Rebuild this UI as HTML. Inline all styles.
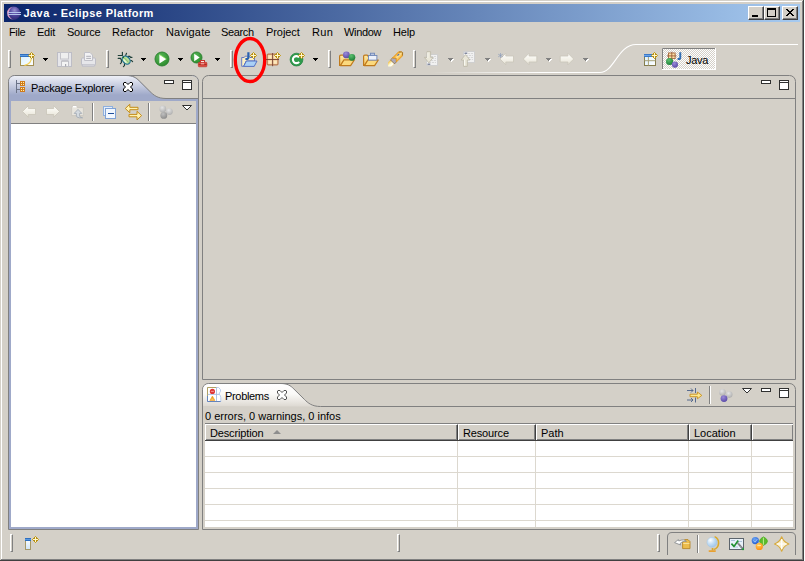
<!DOCTYPE html>
<html><head><meta charset="utf-8"><title>Java - Eclipse Platform</title>
<style>
*{box-sizing:border-box;margin:0;padding:0}
html,body{width:805px;height:561px;overflow:hidden;background:#d4d0c8}
body{position:relative;font-family:"Liberation Sans",sans-serif;font-size:11px;color:#000}
.abs{position:absolute}
.t{position:absolute;white-space:nowrap;line-height:13px;height:13px}
#title{left:4px;top:4px;width:796px;height:18px;background:linear-gradient(90deg,#0a246a 0%,#a6caf0 100%)}
#title .t{left:19.5px;top:3px;color:#fff;font-weight:bold;font-size:11px;letter-spacing:0.43px}
.wbtn{position:absolute;top:6px;width:16px;height:14px;background:#d4d0c8;border:1px solid;border-color:#fff #404040 #404040 #fff;box-shadow:inset -1px -1px 0 #808080}
.menu .t{top:26px}
.sep{position:absolute;width:3px;background:#d4d0c8;border-left:1px solid #fff;border-right:1px solid #808080;border-top:1px solid #fff;border-bottom:1px solid #808080}
.vline{position:absolute;width:2px;border-left:1px solid #808080;border-right:1px solid #fff}
svg{position:absolute;overflow:visible}
.hdr{top:424px;height:17px;background:#d4d0c8;border-top:1px solid #fff;border-left:1px solid #fff;border-right:1px solid #404040;border-bottom:1px solid #404040;box-shadow:inset -1px -1px 0 #808080}
.gl{left:205px;width:588px;height:1px;background:#dcd8cf}
.gv{top:441px;width:1px;height:86px;background:#dcd8cf}
</style></head><body>
<div class="abs" style="left:0;top:0;width:805px;height:561px;background:#d4d0c8"></div>
<div class="abs" style="left:1px;top:1px;width:801px;height:1px;background:#fff"></div>
<div class="abs" style="left:1px;top:1px;width:1px;height:558px;background:#fff"></div>
<div class="abs" style="left:802px;top:1px;width:1px;height:559px;background:#808080"></div>
<div class="abs" style="left:803px;top:0;width:1px;height:561px;background:#404040"></div>
<div class="abs" style="left:804px;top:0;width:1px;height:561px;background:#fff"></div>
<div class="abs" style="left:1px;top:559px;width:802px;height:1px;background:#808080"></div>
<div class="abs" style="left:0;top:560px;width:804px;height:1px;background:#404040"></div>
<div id="title" class="abs"><div class="t">Java - Eclipse Platform</div></div>
<div class="wbtn" style="left:748px"></div><div class="wbtn" style="left:764px"></div><div class="wbtn" style="left:782px"></div>
<svg style="left:0;top:0" width="805" height="561" shape-rendering="crispEdges">
<rect x="752" y="15" width="6" height="2" fill="#000"/>
<path d="M767,8h9v9h-9z M768,10v6h7v-6z" fill="#000" fill-rule="evenodd"/>
<path d="M786,9h2v1h1v1h2v-1h1v-1h2v1h-1v1h-1v1h-1v1h1v1h1v1h1v1h-2v-1h-1v-1h-2v1h-1v1h-2v-1h1v-1h1v-1h1v-1h-1v-1h-1v-1h-1z" fill="#000"/>
</svg>

<div class="menu"><div class="t" style="left:9px;letter-spacing:-0.35px">File</div><div class="t" style="left:37px;letter-spacing:-0.25px">Edit</div><div class="t" style="left:67px;letter-spacing:-0.25px">Source</div><div class="t" style="left:112px;letter-spacing:0px">Refactor</div><div class="t" style="left:166px;letter-spacing:0.15px">Navigate</div><div class="t" style="left:221px;letter-spacing:-0.35px">Search</div><div class="t" style="left:266px;letter-spacing:-0.07px">Project</div><div class="t" style="left:312px;letter-spacing:0.35px">Run</div><div class="t" style="left:344px;letter-spacing:-0.35px">Window</div><div class="t" style="left:393px;letter-spacing:-0.2px">Help</div></div>
<div class="sep" style="left:8px;top:50px;height:18px"></div>
<div class="sep" style="left:106px;top:50px;height:18px"></div>
<div class="sep" style="left:230px;top:50px;height:18px"></div>
<div class="sep" style="left:328px;top:50px;height:18px"></div>
<div class="sep" style="left:413px;top:50px;height:18px"></div>
<svg style="left:0;top:0" width="805" height="561">
<defs><pattern id="chk" width="2" height="2" patternUnits="userSpaceOnUse"><rect width="2" height="2" fill="#d4d0c8"/><rect width="1" height="1" fill="#fff"/><rect x="1" y="1" width="1" height="1" fill="#fff"/></pattern></defs>
<defs><linearGradient id="wl" x1="430" y1="0" x2="540" y2="0" gradientUnits="userSpaceOnUse"><stop offset="0" stop-color="#fff" stop-opacity="0"/><stop offset="1" stop-color="#fff"/></linearGradient></defs>
<rect x="430" y="72" width="112" height="1" fill="url(#wl)"/>
<path d="M540,72.5 H600 C614,72.5 618,44.5 636,44.5 H798" fill="none" stroke="#fff" stroke-width="1.1"/>
<rect x="662" y="48" width="54" height="22" fill="url(#chk)" shape-rendering="crispEdges"/>
<path d="M662.5,70 V48.5 H716" fill="none" stroke="#808080"/>
<path d="M662,69.5 H715.5 V48" fill="none" stroke="#fff"/>
</svg>
<div class="t" style="left:686px;top:54px;letter-spacing:-0.3px">Java</div>

<svg style="left:0;top:0" width="805" height="561">
<defs><linearGradient id="tg" x1="0" y1="76" x2="0" y2="95" gradientUnits="userSpaceOnUse"><stop offset="0" stop-color="#eef0f7"/><stop offset="1" stop-color="#9fa9c9"/></linearGradient></defs>
<path d="M8.5,529.5 V81.5 A6,6 0 0 1 14.5,75.5 H192.5 A6,6 0 0 1 198.5,81.5 V529.5 Z" fill="#9fa9c9" stroke="#808080"/>
<path d="M9,99 V81.5 A5.5,5.5 0 0 1 14.5,76 H126 C133,76 136,78 139.4,81.5 L149.9,91.9 C153.5,95.5 157.5,99 166,99 V99 Z" fill="url(#tg)"/>
<path d="M126,76 C133,75.5 136,77.5 139.4,81.0 L149.9,91.4 C153.5,95.0 157.5,98.5 166,98.5 H198 V81.5 A5.5,5.5 0 0 0 192.5,76 Z" fill="#d4d0c8"/>
<path d="M126,75.5 C133,75.5 136,77.5 139.4,81.0 L149.9,91.4 C153.5,95.0 157.5,98.5 166,98.5 H198" fill="none" stroke="#808080"/>
<rect x="11" y="101" width="185" height="22" fill="#d4d0c8"/>
<rect x="11" y="123" width="185" height="1" fill="#808080"/>
<rect x="11" y="124" width="185" height="403" fill="#fff"/>
</svg>
<div class="t" style="left:31px;top:82px;letter-spacing:-0.25px">Package Explorer</div>
<div class="vline" style="left:92px;top:103px;height:18px"></div>
<div class="vline" style="left:148px;top:103px;height:18px"></div>

<svg style="left:0;top:0" width="805" height="561">
<path d="M202.5,379.5 V81.5 A6,6 0 0 1 208.5,75.5 H789.5 A6,6 0 0 1 795.5,81.5 V379.5 Z" fill="#d4d0c8" stroke="#808080"/>
<path d="M203,98.5 H795" stroke="#808080" fill="none"/>
<path d="M202.5,529.5 V389.5 A6,6 0 0 1 208.5,383.5 H789.5 A6,6 0 0 1 795.5,389.5 V529.5 Z" fill="#d4d0c8" stroke="#808080"/>
<defs><linearGradient id="ptg" x1="0" y1="384" x2="0" y2="406" gradientUnits="userSpaceOnUse"><stop offset="0" stop-color="#fff"/><stop offset="0.45" stop-color="#fbfaf8"/><stop offset="1" stop-color="#dedad3"/></linearGradient></defs>
<path d="M203,406 V389.5 A5.5,5.5 0 0 1 208.5,384 H280.5 C287.5,383.5 290.5,385.5 293.9,389.0 L304.4,399.4 C308.0,403.0 312.0,406.5 320.5,406.5 Z" fill="url(#ptg)"/>
<path d="M280.5,383.5 C287.5,383.5 290.5,385.5 293.9,389.0 L304.4,399.4 C308.0,403.0 312.0,406.5 320.5,406.5 H795" fill="none" stroke="#808080"/>
</svg>
<div class="t" style="left:225px;top:390px;letter-spacing:-0.33px">Problems</div>
<div class="t" style="left:205px;top:410px">0 errors, 0 warnings, 0 infos</div>
<div class="vline" style="left:709px;top:386px;height:18px"></div>
<div class="abs" style="left:205px;top:423px;width:588px;height:104px;background:#fff;border-top:1px solid #808080"></div>
<div class="abs hdr" style="left:205px;width:253px"></div>
<div class="abs hdr" style="left:458px;width:78px"></div>
<div class="abs hdr" style="left:536px;width:153px"></div>
<div class="abs hdr" style="left:689px;width:63px"></div>
<div class="abs hdr" style="left:752px;width:41px;border-right:none"></div>
<div class="abs" style="left:205px;top:440px;width:588px;height:1px;background:#404040"></div>
<div class="t" style="left:210px;top:427px;letter-spacing:-0.15px">Description</div>
<div class="t" style="left:463px;top:427px;letter-spacing:-0.15px">Resource</div>
<div class="t" style="left:541px;top:427px">Path</div>
<div class="t" style="left:694px;top:427px">Location</div>
<div class="abs" style="left:273px;top:430px;width:0;height:0;border-left:4px solid transparent;border-right:4px solid transparent;border-bottom:4px solid #8e8e8e"></div>

<div class="abs gl" style="top:456px"></div>
<div class="abs gl" style="top:472px"></div>
<div class="abs gl" style="top:488px"></div>
<div class="abs gl" style="top:504px"></div>
<div class="abs gl" style="top:520px"></div>
<div class="abs gv" style="left:457px"></div>
<div class="abs gv" style="left:535px"></div>
<div class="abs gv" style="left:688px"></div>
<div class="abs gv" style="left:751px"></div>
<div class="sep" style="left:10px;top:534px;height:18px"></div>
<div class="sep" style="left:397px;top:534px;height:18px"></div>
<div class="sep" style="left:657px;top:534px;height:18px"></div>
<svg style="left:0;top:0" width="805" height="561">
<path d="M667.5,555 V537 Q667.5,532.5 672,532.5 H791 Q795.5,532.5 795.5,537 V555" fill="none" stroke="#808080"/>
</svg>
<div class="vline" style="left:697px;top:535px;height:18px"></div>

<svg style="left:0;top:0" width="805" height="561"><g><defs><radialGradient id="ec" cx="0.42" cy="0.3" r="0.75"><stop offset="0" stop-color="#9890d0"/><stop offset="0.45" stop-color="#5248a0"/><stop offset="1" stop-color="#28226c"/></radialGradient>
<linearGradient id="ecb" x1="0" y1="0" x2="1" y2="0"><stop offset="0" stop-color="#e8a4c8"/><stop offset="0.25" stop-color="#d498c4"/><stop offset="0.5" stop-color="#3a3080"/><stop offset="1" stop-color="#241e64"/></linearGradient>
<clipPath id="ecc"><circle cx="13.7" cy="13.1" r="6.6"/></clipPath></defs>
<circle cx="13.7" cy="13.1" r="6.6" fill="url(#ecb)"/>
<g clip-path="url(#ecc)"><circle cx="15.6" cy="13.1" r="6.9" fill="url(#ec)"/></g>
<rect x="8" y="12" width="13" height="1" fill="#b4c4ec"/><rect x="8" y="14" width="13" height="1" fill="#b4c4ec"/></g>
<defs><linearGradient id="ca" x1="0" y1="0" x2="0" y2="1"><stop offset="0" stop-color="#ffffff"/><stop offset="0.5" stop-color="#f4f2ea"/><stop offset="1" stop-color="#e5e2d5"/></linearGradient></defs>
<g transform="translate(20,52)">
<defs><linearGradient id="nw" x1="0" y1="0" x2="1" y2="1"><stop offset="0" stop-color="#d6f0ff"/><stop offset="1" stop-color="#ffffff"/></linearGradient></defs>
<rect x="0.5" y="2.5" width="13" height="11" fill="url(#nw)" stroke="#a58f52"/>
<rect x="0" y="2" width="10" height="3" fill="#2f6fc0"/><rect x="0" y="3" width="10" height="1" fill="#5a9ae0"/>
<path d="M11.5,5 C11.5,10 9,12.5 4.5,13.3" fill="none" stroke="#f4d056" stroke-width="1.2"/>
</g>
<g transform="translate(28,52)" shape-rendering="crispEdges"><path d="M3,0h1v1h1v1h1v1h1v1h-1v1h-1v1h-1v1h-1v-1h-1v-1h-1v-1h-1v-1h1v-1h1v-1h1z" fill="#b8900f"/><path d="M3,0h1v1h-1z M0,3h1v1h-1z M6,3h1v1h-1z M3,6h1v1h-1z" fill="#c8a42c"/><rect x="3" y="1" width="1" height="5" fill="#fff6cc"/><rect x="1" y="3" width="5" height="1" fill="#fff6cc"/></g>
<g transform="translate(43,58)" shape-rendering="crispEdges"><path d="M0,0h5v1h-1v1h-1v1h-1v-1h-1v-1h-1z" fill="#000"/></g>
<g transform="translate(57,52)">
<rect x="0.5" y="0.5" width="14" height="14" fill="#e6e6ea" stroke="#bdbdc6"/>
<rect x="3.5" y="0.5" width="8" height="6.5" fill="#efefef" stroke="#c4c4ca"/>
<rect x="4.5" y="9" width="7" height="5.5" fill="#f4f4f4" stroke="#c0c0c6"/>
<rect x="5" y="8.5" width="6" height="1" fill="#b8b8be"/>
<rect x="8" y="12" width="1.2" height="2.5" fill="#a8a8b0"/>
</g>
<g transform="translate(81,52)">
<rect x="0.5" y="6" width="14" height="7.5" rx="1" fill="#e6e6ea" stroke="#bdbdc6"/>
<rect x="1.5" y="12.5" width="12" height="2" fill="#d0d0d6" stroke="#bdbdc6" stroke-width="0.6"/>
<path d="M3.5,8.5 V0.5 H9 L11.5,3 V8.5 Z" fill="#f2f2f4" stroke="#c0c0c8"/>
<rect x="5.2" y="3.8" width="4.8" height="1" fill="#b0b0b8"/><rect x="5.2" y="5.9" width="4.8" height="1" fill="#b0b0b8"/>
</g>
<g stroke-linecap="round">
<g stroke="#1f3f38" stroke-width="1.15" fill="none">
<path d="M122.4,52.2 V55.6 M118.2,55.5 H122 M126.5,53.3 L125.6,55.6 M118.2,58.4 H120.4 L121.4,59.8 V62.6 L120.4,63.6 M124.5,63.4 V65.6 L123.4,66.6 M128.2,56.3 H129.8 L130.6,57.3 H132 M130,60.5 H131.5 L132.6,61.6"/>
</g>
<ellipse cx="126.2" cy="60.1" rx="4.5" ry="3.4" transform="rotate(47 126.2 60.1)" fill="#b6dc9c" stroke="#1f6f92" stroke-width="1.2"/>
<path d="M124.6,58.2 L128.6,62.4" stroke="#78b860" stroke-width="0.9"/>
<path d="M123.8,59.8 L126,62.2" stroke="#e4f6d8" stroke-width="1.3"/>
<circle cx="123.4" cy="57.4" r="0.8" fill="#207028"/>
</g>
<g transform="translate(141,58)" shape-rendering="crispEdges"><path d="M0,0h5v1h-1v1h-1v1h-1v-1h-1v-1h-1z" fill="#000"/></g>
<g transform="translate(162,59)">
<defs><radialGradient id="rg" cx="0.4" cy="0.35" r="0.7"><stop offset="0" stop-color="#58b858"/><stop offset="1" stop-color="#2c8a2c"/></radialGradient></defs>
<circle r="7" fill="url(#rg)" stroke="#2a8030" stroke-width="0.9"/>
<path d="M-2.6,-4.6 L4.4,0 L-2.6,4.6Z" fill="#fff"/>
<path d="M-2.6,-4.6 L4.4,0" stroke="#8fe060" stroke-width="0.8"/>
</g>
<g transform="translate(178,58)" shape-rendering="crispEdges"><path d="M0,0h5v1h-1v1h-1v1h-1v-1h-1v-1h-1z" fill="#000"/></g>
<g transform="translate(196.5,57.5)">
<circle r="5.5" fill="url(#rg)" stroke="#2a8030" stroke-width="0.9"/>
<path d="M-2.3,-3.8 L3.2,0 L-2.3,3.8Z" fill="#fff"/>
</g>
<g transform="translate(198,60)">
<rect x="2.5" y="0.5" width="4" height="2.5" fill="#fff" stroke="#c83830"/>
<rect x="0.3" y="2.3" width="8.6" height="4.5" rx="0.8" fill="#d8483e" stroke="#c03028" stroke-width="0.6"/>
<rect x="0.6" y="4" width="8" height="0.9" fill="#b02820"/>
<rect x="2.8" y="3.4" width="3.4" height="0.9" fill="#f8d0c8"/>
</g>
<g transform="translate(215,58)" shape-rendering="crispEdges"><path d="M0,0h5v1h-1v1h-1v1h-1v-1h-1v-1h-1z" fill="#000"/></g>
<g transform="translate(241,51)">
<path d="M0.7,6.5 H3.2 L4.2,5.2 H8 L9,6.5 H13.5 V10 H5.2 L2.6,15.3 H0.7 Z" fill="#fdf1c4" stroke="#5a6fc4" stroke-width="0.9" stroke-linejoin="round"/>
<path d="M2.6,15.4 L5.4,10 H16 L13.2,15.4 Z" fill="#a9d0f6" stroke="#4a66c0" stroke-width="0.9" stroke-linejoin="round"/>
<path d="M7.4,1.3 V6.3 Q7.4,8 5.6,8 H4.4" fill="none" stroke="#2a62b0" stroke-width="2.2"/>
</g>
<g transform="translate(250,52)" shape-rendering="crispEdges"><path d="M3,0h1v1h1v1h1v1h1v1h-1v1h-1v1h-1v1h-1v-1h-1v-1h-1v-1h-1v-1h1v-1h1v-1h1z" fill="#b8900f"/><path d="M3,0h1v1h-1z M0,3h1v1h-1z M6,3h1v1h-1z M3,6h1v1h-1z" fill="#c8a42c"/><rect x="3" y="1" width="1" height="5" fill="#fff6cc"/><rect x="1" y="3" width="5" height="1" fill="#fff6cc"/></g>
<g transform="translate(266,53)">
<rect x="1.2" y="1.2" width="10.8" height="10.6" rx="1" fill="#f3cfa0" stroke="#b87850" stroke-width="1.2"/>
<rect x="2.4" y="2.4" width="3" height="3" fill="#fde9bd"/><rect x="7.8" y="2.4" width="3" height="3" fill="#fde9bd"/>
<rect x="2.4" y="7.7" width="3" height="3" fill="#fde9bd"/><rect x="7.8" y="7.7" width="3" height="3" fill="#fde9bd"/>
<path d="M6.6,0 V13.2 M0,6.5 H13" stroke="#744030" stroke-width="0.9"/>
</g>
<g transform="translate(274,52)" shape-rendering="crispEdges"><path d="M3,0h1v1h1v1h1v1h1v1h-1v1h-1v1h-1v1h-1v-1h-1v-1h-1v-1h-1v-1h1v-1h1v-1h1z" fill="#b8900f"/><path d="M3,0h1v1h-1z M0,3h1v1h-1z M6,3h1v1h-1z M3,6h1v1h-1z" fill="#c8a42c"/><rect x="3" y="1" width="1" height="5" fill="#fff6cc"/><rect x="1" y="3" width="5" height="1" fill="#fff6cc"/></g>
<g transform="translate(296.5,59.6)">
<circle r="6.4" fill="#2f9a4c" stroke="#2a8846" stroke-width="0.8"/>
<path d="M2.6,-2.2 A3.5,3.5 0 1 0 2.6,2.2" fill="none" stroke="#fff" stroke-width="2.1"/>
</g>
<g transform="translate(298,52)" shape-rendering="crispEdges"><path d="M3,0h1v1h1v1h1v1h1v1h-1v1h-1v1h-1v1h-1v-1h-1v-1h-1v-1h-1v-1h1v-1h1v-1h1z" fill="#b8900f"/><path d="M3,0h1v1h-1z M0,3h1v1h-1z M6,3h1v1h-1z M3,6h1v1h-1z" fill="#c8a42c"/><rect x="3" y="1" width="1" height="5" fill="#fff6cc"/><rect x="1" y="3" width="5" height="1" fill="#fff6cc"/></g>
<g transform="translate(313,58)" shape-rendering="crispEdges"><path d="M0,0h5v1h-1v1h-1v1h-1v-1h-1v-1h-1z" fill="#000"/></g>
<defs><linearGradient id="fo" x1="0" y1="0" x2="0" y2="1"><stop offset="0" stop-color="#fdeaa8"/><stop offset="1" stop-color="#f6c45c"/></linearGradient></defs>
<g transform="translate(339,52.6)">
<path d="M0.6,4 Q0.6,2.6 1.8,2.6 H4.2 L5.4,3.9 H12.4 Q13.4,3.9 13.4,5 V7.4 H5 L1.6,12.9 H0.6 Z" fill="url(#fo)" stroke="#c07a1c" stroke-width="1.2" stroke-linejoin="round"/>
<path d="M1.4,13 L4.9,7.4 H15.3 L11.6,13 Z" fill="#fbd97e" stroke="#c07a1c" stroke-width="1.2" stroke-linejoin="round"/>
</g>
<defs><radialGradient id="pb" cx="0.4" cy="0.3" r="0.7"><stop offset="0" stop-color="#9a8ad8"/><stop offset="1" stop-color="#5a4aa8"/></radialGradient>
<radialGradient id="gb" cx="0.4" cy="0.3" r="0.7"><stop offset="0" stop-color="#5cc070"/><stop offset="1" stop-color="#1e8038"/></radialGradient>
<radialGradient id="grb" cx="0.4" cy="0.3" r="0.7"><stop offset="0" stop-color="#e4e4e4"/><stop offset="1" stop-color="#b0b0b0"/></radialGradient>
<radialGradient id="grb2" cx="0.4" cy="0.3" r="0.7"><stop offset="0" stop-color="#c0c0c0"/><stop offset="1" stop-color="#8c8c8c"/></radialGradient></defs>
<circle cx="346.4" cy="54.9" r="3.4" fill="url(#pb)"/><circle cx="351.9" cy="57.3" r="3.4" fill="url(#gb)"/>
<g transform="translate(363,52.6)">
<path d="M0.6,4 Q0.6,2.6 1.8,2.6 H4.2 L5.4,3.9 H12.4 Q13.4,3.9 13.4,5 V7.4 H5 L1.6,12.9 H0.6 Z" fill="url(#fo)" stroke="#c07a1c" stroke-width="1.2" stroke-linejoin="round"/>
<path d="M1.4,13 L4.9,7.4 H15.3 L11.6,13 Z" fill="#fbd97e" stroke="#c07a1c" stroke-width="1.2" stroke-linejoin="round"/>
</g>
<g transform="translate(368,52.5)"><rect x="2.5" y="0.7" width="4" height="2.6" fill="#b8c4e0" stroke="#7088b8" stroke-width="0.9"/>
<rect x="0.5" y="3" width="8.4" height="4.6" fill="#edf1fa" stroke="#7088b8" stroke-width="0.9"/></g>
<g transform="translate(395.2,59.1) rotate(-45) scale(0.93,0.9)">
<defs><linearGradient id="pt" x1="0" y1="0" x2="0" y2="1"><stop offset="0" stop-color="#f8c040"/><stop offset="0.45" stop-color="#fff8c8"/><stop offset="0.8" stop-color="#ffffff"/><stop offset="1" stop-color="#fbe08c"/></linearGradient>
<linearGradient id="pg" x1="0" y1="0" x2="0" y2="1"><stop offset="0" stop-color="#f4a420"/><stop offset="0.5" stop-color="#fde49a"/><stop offset="1" stop-color="#f4a828"/></linearGradient></defs>
<path d="M-11,0.2 L-8,-3 H-4 V3.2 H-8 Z" fill="url(#pt)"/>
<path d="M-4.2,-3.1 H-1.2 L1.6,0 L-1.2,3.2 H-4.2 Z" fill="#aca8b8" stroke="#8c6424" stroke-width="0.7" stroke-linejoin="round"/>
<path d="M-1.2,-3.1 H8 L10.6,-0.6 V0.8 L8,3.2 H-1.2 L1.6,0 Z" fill="url(#pg)" stroke="#e89a1c" stroke-width="0.8" stroke-linejoin="round"/>
<path d="M8.2,-2.6 L10.4,-0.4 V0.6 L8.2,2.8" fill="none" stroke="#8c6424" stroke-width="0.8"/>
<circle cx="5" cy="-0.9" r="0.65" fill="#2858b8"/><circle cx="6.3" cy="-0.9" r="0.65" fill="#2858b8"/>
</g>
<g transform="translate(426,54)"><rect x="0.5" y="0.5" width="11" height="11" fill="#f1f1f1" stroke="#cfcfcf"/>
<path d="M5,2.5 H10 M3,4.5 H10 M5,6.5 H10 M3,8.5 H10" stroke="#d4d4d4" stroke-width="0.9" stroke-dasharray="2.2,0.8"/></g>
<rect x="427.5" y="63.6" width="2.8" height="1.2" fill="#68708c"/>
<path d="M427,51.6 H430.6 V57.4 H433.2 L428.8,62.8 L424.4,57.4 H427 Z" fill="#e9e6d8" stroke="#bab6a6" stroke-width="0.8" stroke-linejoin="round"/>
<path d="M427.8,52.4 V58" stroke="#fbfaf4" stroke-width="0.9"/>
<g transform="translate(448,58)" shape-rendering="crispEdges"><path d="M0,0h5v1h-1v1h-1v1h-1v-1h-1v-1h-1z" transform="translate(1,1)" fill="#fff"/><path d="M0,0h5v1h-1v1h-1v1h-1v-1h-1v-1h-1z" fill="#808080"/></g>
<g transform="translate(463,51)"><rect x="0.5" y="0.5" width="11" height="11" fill="#f1f1f1" stroke="#cfcfcf"/>
<path d="M5,2.5 H10 M3,4.5 H10 M5,6.5 H10 M3,8.5 H10" stroke="#d4d4d4" stroke-width="0.9" stroke-dasharray="2.2,0.8"/></g>
<rect x="464.5" y="52.6" width="2.8" height="1.2" fill="#68708c"/>
<path d="M463.7,66.4 H467.3 V60 H469.9 L465.5,54.6 L461.1,60 H463.7 Z" fill="#e9e6d8" stroke="#bab6a6" stroke-width="0.8" stroke-linejoin="round"/>
<path d="M464.5,65.6 V59.6" stroke="#fbfaf4" stroke-width="0.9"/>
<g transform="translate(485,58)" shape-rendering="crispEdges"><path d="M0,0h5v1h-1v1h-1v1h-1v-1h-1v-1h-1z" transform="translate(1,1)" fill="#fff"/><path d="M0,0h5v1h-1v1h-1v1h-1v-1h-1v-1h-1z" fill="#808080"/></g>
<g transform="translate(500,59)"><path d="M0,0 L5.8,-5.8 V-3 H13.5 V3 H5.8 V5.8 Z" fill="url(#ca)" stroke="#c9c5b9" stroke-width="0.8" stroke-linejoin="round"/></g>
<path d="M500.5,53 V58 M498.2,54.2 L502.8,56.8 M502.8,54.2 L498.2,56.8" stroke="#8a9aba" stroke-width="0.65"/>
<g transform="translate(523.3,59)"><path d="M0,0 L5.8,-5.8 V-3 H13.5 V3 H5.8 V5.8 Z" fill="url(#ca)" stroke="#c9c5b9" stroke-width="0.8" stroke-linejoin="round"/></g>
<g transform="translate(546,58)" shape-rendering="crispEdges"><path d="M0,0h5v1h-1v1h-1v1h-1v-1h-1v-1h-1z" transform="translate(1,1)" fill="#fff"/><path d="M0,0h5v1h-1v1h-1v1h-1v-1h-1v-1h-1z" fill="#808080"/></g>
<g transform="translate(573.7,59) scale(-1,1)"><path d="M0,0 L5.8,-5.8 V-3 H13.5 V3 H5.8 V5.8 Z" fill="url(#ca)" stroke="#c9c5b9" stroke-width="0.8" stroke-linejoin="round"/></g>
<g transform="translate(583,58)" shape-rendering="crispEdges"><path d="M0,0h5v1h-1v1h-1v1h-1v-1h-1v-1h-1z" transform="translate(1,1)" fill="#fff"/><path d="M0,0h5v1h-1v1h-1v1h-1v-1h-1v-1h-1z" fill="#808080"/></g>
<g transform="translate(644,52)">
<defs><linearGradient id="op" x1="0" y1="0" x2="1" y2="1"><stop offset="0" stop-color="#d8f0ff"/><stop offset="1" stop-color="#ffffff"/></linearGradient></defs>
<rect x="0.5" y="2.5" width="11" height="11" fill="url(#op)" stroke="#857c4c"/>
<rect x="0" y="2" width="8" height="3" fill="#3a78c8"/><rect x="0" y="3" width="8" height="1" fill="#6aa4e8"/>
<path d="M4.4,5 V13.5 M0.5,8.7 H11.5" stroke="#a8a078" stroke-width="1"/>
</g>
<g transform="translate(651,52)" shape-rendering="crispEdges"><path d="M3,0h1v1h1v1h1v1h1v1h-1v1h-1v1h-1v1h-1v-1h-1v-1h-1v-1h-1v-1h1v-1h1v-1h1z" fill="#b8900f"/><path d="M3,0h1v1h-1z M0,3h1v1h-1z M6,3h1v1h-1z M3,6h1v1h-1z" fill="#c8a42c"/><rect x="3" y="1" width="1" height="5" fill="#fff6cc"/><rect x="1" y="3" width="5" height="1" fill="#fff6cc"/></g>
<g>
<rect x="668.5" y="53" width="6.6" height="5.6" fill="#fbe2a8" stroke="#a8683c" stroke-width="0.9"/>
<path d="M671.8,51.8 V59.3 M667,55.9 H676.4" stroke="#9c5c38" stroke-width="0.9"/>
<path d="M680.3,52.2 V57.4 Q680.3,59 678.7,59 H677.6" fill="none" stroke="#2f6db4" stroke-width="1.9"/>
<circle cx="669.6" cy="61.5" r="3.6" fill="url(#gb)"/><circle cx="674.9" cy="64.6" r="3.1" fill="url(#pb)"/>
</g>
<g shape-rendering="crispEdges"><rect x="16" y="80" width="1" height="13" fill="#6c7488"/><rect x="17" y="83" width="3" height="1" fill="#6c7488"/><rect x="17" y="89" width="3" height="1" fill="#6c7488"/>
<rect x="20" y="81" width="5" height="5" fill="#d07a1c"/><rect x="20" y="87" width="5" height="5" fill="#d07a1c"/>
<g fill="#fff2a8"><rect x="21" y="82" width="1" height="1"/><rect x="23" y="82" width="1" height="1"/><rect x="21" y="84" width="1" height="1"/><rect x="23" y="84" width="1" height="1"/>
<rect x="21" y="88" width="1" height="1"/><rect x="23" y="88" width="1" height="1"/><rect x="21" y="90" width="1" height="1"/><rect x="23" y="90" width="1" height="1"/></g></g>
<path transform="translate(123,82)" d="M0.5,1 L1,0.5 H3 L5,2.5 L7,0.5 H9 L9.5,1 V3 L7.5,5 L9.5,7 V9 L9,9.5 H7 L5,7.5 L3,9.5 H1 L0.5,9 V7 L2.5,5 L0.5,3 Z" fill="#fff" stroke="#000" stroke-width="1"/>
<g shape-rendering="crispEdges"><rect x="164.5" y="80.5" width="9" height="3" fill="#fff" stroke="#303030"/>
<rect x="182.5" y="80.5" width="9" height="9" fill="#fff" stroke="#303030"/><rect x="182" y="82" width="10" height="1" fill="#303030"/></g>
<g shape-rendering="crispEdges"><rect x="761.5" y="80.5" width="9" height="3" fill="#fff" stroke="#303030"/>
<rect x="779.5" y="80.5" width="9" height="9" fill="#fff" stroke="#303030"/><rect x="779" y="82" width="10" height="1" fill="#303030"/></g>
<g shape-rendering="crispEdges"><rect x="761.5" y="388.5" width="9" height="3" fill="#fff" stroke="#303030"/>
<rect x="779.5" y="388.5" width="9" height="9" fill="#fff" stroke="#303030"/><rect x="779" y="390" width="10" height="1" fill="#303030"/></g>
<path d="M182.5,105.5 H191.5 L187,110 Z" fill="#fff" stroke="#303030" stroke-width="1"/>
<path d="M742.5,388.5 H751.5 L747,393 Z" fill="#fff" stroke="#303030" stroke-width="1"/>
<g transform="translate(22.5,111.5)"><path d="M0,0 L5.8,-5.8 V-3 H13 V3 H5.8 V5.8 Z" fill="url(#ca)" stroke="#c9c5b9" stroke-width="0.8" stroke-linejoin="round"/></g>
<g transform="translate(59.5,111.5) scale(-1,1)"><path d="M0,0 L5.8,-5.8 V-3 H13 V3 H5.8 V5.8 Z" fill="url(#ca)" stroke="#c9c5b9" stroke-width="0.8" stroke-linejoin="round"/></g>
<g transform="translate(71,105)">
<path d="M0.6,2.6 L1.6,0.6 H5.4 L6.4,2.6 H12.4 V10.6 H0.6 Z" fill="#e8e5de" stroke="#c9c6c0" stroke-width="0.9"/>
<rect x="2" y="1" width="3.4" height="1.4" fill="#fff"/>
<path d="M7,4.4 L10.8,8.4 H8.6 V10.8 Q8.6,12.6 11.6,12.8 H8.4 Q5.4,12.6 5.4,10.8 V8.4 H3.2 Z" fill="#d4dae0" stroke="#a4acb6" stroke-width="0.9" stroke-linejoin="round"/>
</g>
<g shape-rendering="crispEdges"><rect x="103.5" y="106.5" width="9" height="9" fill="#e4eefb" stroke="#8fb0de"/>
<rect x="105.5" y="108.5" width="10" height="10" fill="#f2f7fe" stroke="#7fa2d6"/><rect x="108" y="113" width="6" height="1.4" fill="#1f4f9c"/></g>
<path d="M125.3,108.5 L129.8,104.2 V107.3 H138 V109.7 H129.8 V112.8 Z" fill="#fff2b0" stroke="#c48c18" stroke-width="1" stroke-linejoin="round"/>
<path d="M141.6,115.6 L137,111.3 V114.4 H129 V116.8 H137 V119.9 Z" fill="#fff2b0" stroke="#c48c18" stroke-width="1" stroke-linejoin="round"/>
<circle cx="162.8" cy="109" r="3.4" fill="url(#grb)"/><circle cx="169.4" cy="111.6" r="3.4" fill="url(#grb)"/><circle cx="163.8" cy="115.4" r="3.4" fill="url(#grb2)"/>
<g transform="translate(207,387)">
<path d="M0.5,0.5 H11.6 Q14.2,2.6 13.6,4.2 Q12.2,6 12.2,7 Q13.8,9 13.8,10.6 V14.5 H0.5 Z" fill="#fff" stroke="#b4c8ec" stroke-width="0.9"/>
<path d="M0.5,9 V0.5 H9.4" fill="none" stroke="#b0a264" stroke-width="1"/>
<path d="M0.5,9 V14.5 H13.6" fill="none" stroke="#6484bc" stroke-width="1"/>
<path d="M9.5,0.5 V14 M0.8,7.4 H12" stroke="#a8bce0" stroke-width="0.9"/>
<circle cx="5.4" cy="4.4" r="2.6" fill="#de3636"/><rect x="3.9" y="3.9" width="3" height="0.9" fill="#f49c9c"/>
<path d="M5.4,9 L8,13.5 H2.8 Z" fill="#f0a020" stroke="#e8981c" stroke-width="0.5" stroke-linejoin="round"/><rect x="4.3" y="11.7" width="2.2" height="0.9" fill="#fde090"/>
</g>
<path transform="translate(277,390)" d="M0.5,1 L1,0.5 H3 L5,2.5 L7,0.5 H9 L9.5,1 V3 L7.5,5 L9.5,7 V9 L9,9.5 H7 L5,7.5 L3,9.5 H1 L0.5,9 V7 L2.5,5 L0.5,3 Z" fill="#fff" stroke="#505050" stroke-width="1"/>
<g transform="translate(686,388)">
<path d="M1,2.5 H7 M5,0.5 L7,2.5 L5,4.5 M9.5,0 V5 M1,12 H7 M5,10 L7,12 L5,14 M9.5,9.5 V14.5" fill="none" stroke="#4a6088" stroke-width="0.9"/>
<path d="M4,6.2 H11.4 V4 L15.8,7.4 L11.4,10.8 V8.7 H4 Z" fill="#fde98e" stroke="#c8901c" stroke-width="0.9" stroke-linejoin="round"/>
</g>
<circle cx="722.5" cy="392.4" r="3.3" fill="url(#grb)"/><circle cx="729.2" cy="394.6" r="3.3" fill="url(#grb)"/><circle cx="724" cy="398.6" r="3.4" fill="url(#pb)"/>
<g transform="translate(25,538)"><defs><linearGradient id="fv" x1="0" y1="0" x2="0" y2="1"><stop offset="0" stop-color="#fff"/><stop offset="1" stop-color="#cfe4f8"/></linearGradient></defs>
<rect x="0.5" y="0.5" width="5" height="11" fill="url(#fv)" stroke="#a59868"/><rect x="0" y="0" width="6" height="3" fill="#2f6fc0"/><rect x="0" y="1" width="6" height="1" fill="#5a9ae0"/></g>
<g transform="translate(32,536)" shape-rendering="crispEdges"><path d="M3,0h1v1h1v1h1v1h1v1h-1v1h-1v1h-1v1h-1v-1h-1v-1h-1v-1h-1v-1h1v-1h1v-1h1z" fill="#b8900f"/><path d="M3,0h1v1h-1z M0,3h1v1h-1z M6,3h1v1h-1z M3,6h1v1h-1z" fill="#c8a42c"/><rect x="3" y="1" width="1" height="5" fill="#fff6cc"/><rect x="1" y="3" width="5" height="1" fill="#fff6cc"/></g>
<g transform="translate(674,538)">
<path d="M8.6,3.4 L11,1.6 H14 L16,3.6 V10.6 H8.6 Z" fill="#ecbc4c" stroke="#b88828" stroke-width="0.9" stroke-linejoin="round"/>
<rect x="9.2" y="5" width="6.2" height="1" fill="#fbe094"/>
<path d="M0.6,4.6 L4.4,1.6 L4.8,3 C8,1.4 11,1.6 12.4,3.4 C10.4,3 8,3.6 6,5.6 L6.6,7 Z" fill="#fff" stroke="#808488" stroke-width="0.8" stroke-linejoin="round"/>
</g>
<g><defs><radialGradient id="gl" cx="0.35" cy="0.3" r="0.75"><stop offset="0" stop-color="#ffffff"/><stop offset="0.5" stop-color="#c4def4"/><stop offset="1" stop-color="#9cc4e8"/></radialGradient></defs>
<path d="M714.6,536.6 A7,7 0 0 1 713.6,549.6" fill="none" stroke="#d8a82c" stroke-width="1.6"/>
<path d="M712.5,548 V550.5" stroke="#d8a82c" stroke-width="1.6"/>
<rect x="708.5" y="550.3" width="7.5" height="1.6" rx="0.8" fill="#e8a030"/>
<circle cx="712" cy="542.3" r="5" fill="url(#gl)" stroke="#a8c8e4" stroke-width="0.6"/></g>
<g transform="translate(729,538)">
<rect x="0.5" y="0.5" width="14" height="11" fill="#e9f1f9" stroke="#5c646c"/>
<path d="M2,2.5 H6 M9,3.5 H13 M6,9 H9" stroke="#a8c0d8" stroke-width="0.9"/>
<path d="M2.4,5.6 L5,8.4 L9.2,2.6" fill="none" stroke="#1f9030" stroke-width="1.7"/>
<path d="M8.6,4.8 L13.4,10.4" stroke="#707478" stroke-width="1.8"/><path d="M8.8,5 L13.2,10.2" stroke="#e8e8e8" stroke-width="0.6" stroke-dasharray="1,1"/>
<circle cx="14" cy="11.2" r="1.1" fill="#209838"/>
</g>
<g><defs><radialGradient id="bb" cx="0.4" cy="0.3" r="0.7"><stop offset="0" stop-color="#6aa4f4"/><stop offset="1" stop-color="#2860d0"/></radialGradient>
<radialGradient id="ob" cx="0.4" cy="0.3" r="0.7"><stop offset="0" stop-color="#ffd060"/><stop offset="1" stop-color="#ff9010"/></radialGradient></defs>
<circle cx="755.3" cy="540.6" r="3.6" fill="url(#bb)"/><path d="M753.4,540.4 L755,542.2 L757.4,539" fill="none" stroke="#a8ccff" stroke-width="0.8"/>
<path d="M763.4,536.8 Q767.6,539 767.5,541.2 Q767.3,543.6 763.4,545.5 Q759.8,543.6 759.5,541.2 Q759.5,539 763.4,536.8Z" fill="#5cbc2c" stroke="#4aa820" stroke-width="0.6" stroke-linejoin="round"/><path d="M763.4,537.6 V544.8" stroke="#c8f0a0" stroke-width="0.9"/>
<circle cx="759.3" cy="546.4" r="3.6" fill="url(#ob)"/><rect x="757.4" y="545" width="3.6" height="0.9" fill="#ffe8a8"/></g>
<g transform="translate(781.7,544)"><path d="M0,-7.2 Q1.9,-1.9 7.2,0 Q1.9,1.9 0,7.2 Q-1.9,1.9 -7.2,0 Q-1.9,-1.9 0,-7.2 Z" fill="#f8edcc" stroke="#d6a93c" stroke-width="1.1" stroke-linejoin="round"/>
<path d="M0,-5 V5 M-5,0 H5" stroke="#fff" stroke-width="1.2"/></g></svg>
<svg style="left:0;top:0" width="805" height="561"><ellipse cx="250" cy="60" rx="14.7" ry="21.5" fill="none" stroke="#ff0000" stroke-width="3.3"/></svg>
</body></html>
